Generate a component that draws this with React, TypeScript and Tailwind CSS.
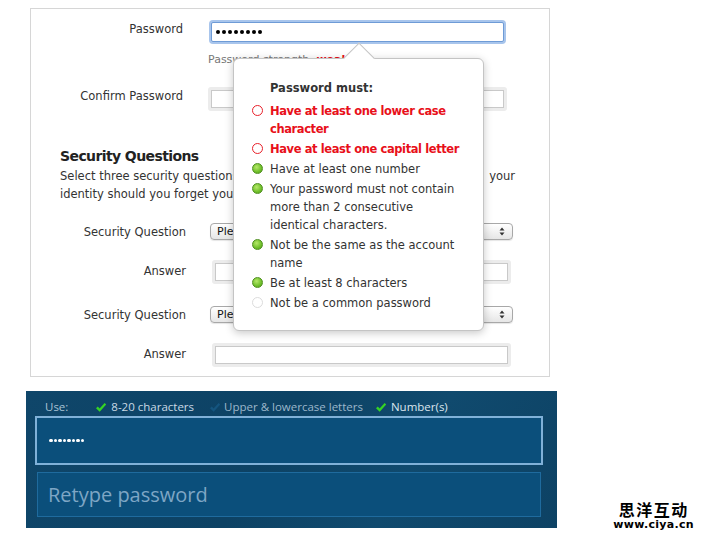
import { ReactNode } from 'react';

const top = '[font-family:"DejaVu_Sans",sans-serif]';

interface IRule {
	ok: 'pass' | 'fail' | 'none';
	text: ReactNode;
}

const rules: IRule[] = [
	{ ok: 'fail', text: 'Have at least one lower case character' },
	{ ok: 'fail', text: 'Have at least one capital letter' },
	{ ok: 'pass', text: 'Have at least one number' },
	{
		ok: 'pass',
		text: (
			<>
				Your password must not contain more than 2 consecutive
				<br />
				identical characters.
			</>
		)
	},
	{ ok: 'pass', text: 'Not be the same as the account name' },
	{ ok: 'pass', text: 'Be at least 8 characters' },
	{ ok: 'none', text: 'Not be a common password' }
];

const Dot = ({ ok }: { ok: IRule['ok'] }) => {
	if (ok === 'pass')
		return (
			<span className="mt-[3px] w-[11px] h-[11px] rounded-full border border-[#4f8f1f] bg-[radial-gradient(circle_at_40%_35%,#b6e86a,#6fbf2a_60%,#4f9a1c)] shrink-0" />
		);
	if (ok === 'fail')
		return <span className="mt-[3px] w-[11px] h-[11px] rounded-full border-[1.5px] border-[#e8202a] bg-white shrink-0" />;
	return <span className="mt-[3px] w-[11px] h-[11px] rounded-full border border-[#dcdcdc] bg-white shrink-0" />;
};

const Check = ({ dim }: { dim?: boolean }) => (
	<svg width="12" height="11" viewBox="0 0 12 11" className="shrink-0">
		<path
			d="M1 6.2 L2.8 4.6 L4.6 6.6 L9.6 1 L11.2 2.4 L4.7 9.8 Z"
			fill={dim ? '#15557f' : '#35d424'}
		/>
	</svg>
);

const Select = () => (
	<div className="w-[303px] h-[17px] rounded-[4px] border border-[#a8a8a8] bg-[linear-gradient(#ffffff,#e6e6e6)] flex items-center justify-between pl-[6px] pr-[7px] shadow-[0_1px_1px_rgba(0,0,0,0.1)]">
		<span className="text-[11px] leading-[15px] text-[#111]">Please select...</span>
		<svg width="6" height="9" viewBox="0 0 6 9">
			<path d="M3 0.5 L5.5 3.5 H0.5 Z M3 8.5 L5.5 5.5 H0.5 Z" fill="#333" />
		</svg>
	</div>
);

const TextBox = ({ w }: { w: string }) => (
	<div className={`${w} h-[24px] bg-[#ececec] p-[3px] rounded-[3px]`}>
		<div className="h-full bg-white border border-[#c9c9c9]" />
	</div>
);

export default function App() {
	return (
		<div className="w-[720px] h-[540px] bg-white flex flex-col overflow-hidden">
			{/* top form */}
			<div className={`relative ml-[30px] mt-[8px] w-[520px] h-[369px] border border-[#d6d6d6] text-[11.5px] text-[#333] ${top}`}>
				<div className="flex mt-[11px] h-[24px]">
					<div className="w-[152px] text-right leading-[16px] mt-[1px]">Password</div>
					<div className="ml-[26px] w-[297px] h-[24px] bg-[#a8c5ec] p-[2px] rounded-[4px]">
						<div className="h-full bg-white border border-[#6e9bd6] rounded-[2px] flex items-center gap-[2px] pl-[4px]">
							{Array.from({ length: 8 }).map((_, i) => (
								<span key={i} className="w-[4px] h-[4px] rounded-full bg-black" />
							))}
						</div>
					</div>
				</div>
				<div className="ml-[177px] mt-[8px] h-[16px] leading-[16px] text-[11px] text-[#777]">
					Password strength: <span className="text-[#e8101a] font-bold">weak</span>
				</div>
				<div className="flex mt-[19px] h-[24px]">
					<div className="w-[152px] text-right leading-[16px] mt-[1px]">Confirm Password</div>
					<div className="ml-[25px]">
						<TextBox w="w-[299px]" />
					</div>
				</div>
				<h2 className="ml-[29px] mt-[36px] text-[14px] leading-[18px] font-bold tracking-[-0.6px] text-[#222]">
					Security Questions
				</h2>
				<div className="ml-[29px] mt-[2px] leading-[18px] whitespace-nowrap">
					<div className="flex justify-between w-[455px]">
						<span>Select three security questions. These questions will help us verify</span>
						<span>your</span>
					</div>
					<div>identity should you forget your password.</div>
				</div>
				<div className="flex items-center mt-[20px] h-[17px]">
					<div className="w-[155px] text-right leading-[16px]">Security Question</div>
					<div className="ml-[24px]">
						<Select />
					</div>
				</div>
				<div className="flex items-center mt-[20px] h-[24px]">
					<div className="w-[155px] text-right leading-[16px] -mt-[3px]">Answer</div>
					<div className="ml-[26px]">
						<TextBox w="w-[299px]" />
					</div>
				</div>
				<div className="flex items-center mt-[22px] h-[17px]">
					<div className="w-[155px] text-right leading-[16px]">Security Question</div>
					<div className="ml-[24px]">
						<Select />
					</div>
				</div>
				<div className="flex items-center mt-[20px] h-[24px]">
					<div className="w-[155px] text-right leading-[16px] -mt-[3px]">Answer</div>
					<div className="ml-[26px]">
						<TextBox w="w-[299px]" />
					</div>
				</div>

				{/* popover */}
				<div className="absolute left-[202px] top-[49px] w-[251px] h-[273px] bg-white border border-[#c4c4c4] rounded-[6px] shadow-[0_2px_8px_rgba(0,0,0,0.22)]">
					<div className="absolute left-[114px] -top-[12px] w-[22px] h-[22px] rotate-45 bg-white border-l border-t border-[#c4c4c4]" />
					<div className="relative pt-[20px]">
						<div className="pl-[36px] leading-[18px] font-bold text-[#333]">Password must:</div>
						<ul className="mt-[5px] pl-[18px] flex flex-col gap-[2px]">
							{rules.map(({ ok, text }, i) => (
								<li key={i} className="flex items-start gap-[7px]">
									<Dot ok={ok} />
									<span
										className={`w-[198px] leading-[18px] ${
											ok === 'fail' ? 'text-[#e8101a] font-bold tracking-[-0.4px]' : 'text-[#333]'
										}`}>
										{text}
									</span>
								</li>
							))}
						</ul>
					</div>
				</div>
			</div>

			{/* bottom row */}
			<div className="flex items-end mt-[14px]">
				<div className='ml-[26px] w-[531px] h-[137px] bg-[linear-gradient(120deg,#0f466a,#0d4264_45%,#104a6e_70%,#0d4264)] pt-[8px] [font-family:"Open_Sans",sans-serif]'>
					<div className="flex items-center h-[16px] pl-[19px] text-[11.5px] leading-[16px]">
						<span className="text-[#a9c3d6]">Use:</span>
						<span className="ml-[27px]">
							<Check />
						</span>
						<span className="ml-[4px] text-[#c9d9e5]">8-20 characters</span>
						<span className="ml-[15px]">
							<Check dim />
						</span>
						<span className="ml-[3px] text-[#9cb7cb]">Upper &amp; lowercase letters</span>
						<span className="ml-[12px]">
							<Check />
						</span>
						<span className="ml-[4px] text-[#dbe6ee]">Number(s)</span>
					</div>
					<div className="ml-[9px] mt-[1px] w-[508px] h-[49px] border-2 border-[#80b1d8] bg-[#0b4f7b] flex items-center gap-[1px] pl-[12px]">
						{Array.from({ length: 8 }).map((_, i) => (
							<span key={i} className="w-[3.5px] h-[3.5px] rounded-full bg-white" />
						))}
					</div>
					<div className="ml-[11px] mt-[7px] w-[504px] h-[45px] border border-[#1f6b9e] bg-[#0b4f7b] flex items-center pl-[10px] text-[20px] text-[#7ea6c5]">
						Retype password
					</div>
				</div>
				<div className='ml-auto mr-[26px] -mb-[4px] flex flex-col items-center font-bold text-black [text-shadow:0_0_2px_#fff,0_0_2px_#fff] [font-family:"Noto_Sans_CJK_SC",sans-serif]'>
					<span className="text-[16px] leading-[18px] tracking-[1.5px]">思洋互动</span>
					<span className='text-[11px] leading-[14px] tracking-[0.3px] [font-family:"DejaVu_Sans",sans-serif]'>www.ciya.cn</span>
				</div>
			</div>
		</div>
	);
}
